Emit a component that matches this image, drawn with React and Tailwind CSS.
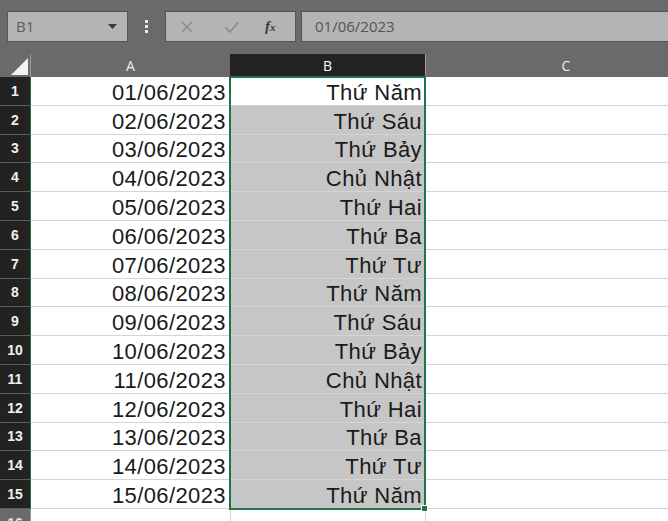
const dates = [
  ['01/06/2023', 'Thứ Năm'],
  ['02/06/2023', 'Thứ Sáu'],
  ['03/06/2023', 'Thứ Bảy'],
  ['04/06/2023', 'Chủ Nhật'],
  ['05/06/2023', 'Thứ Hai'],
  ['06/06/2023', 'Thứ Ba'],
  ['07/06/2023', 'Thứ Tư'],
  ['08/06/2023', 'Thứ Năm'],
  ['09/06/2023', 'Thứ Sáu'],
  ['10/06/2023', 'Thứ Bảy'],
  ['11/06/2023', 'Chủ Nhật'],
  ['12/06/2023', 'Thứ Hai'],
  ['13/06/2023', 'Thứ Ba'],
  ['14/06/2023', 'Thứ Tư'],
  ['15/06/2023', 'Thứ Năm'],
]

function Row({ n, a, b, active }) {
  return (
    <div className="flex h-[28.8px]">
      <div className="w-[30px] shrink-0 bg-[#222222] border-b border-[#5c5c5c] flex items-end justify-center pb-[3px] text-[14px] text-[#f0f0f0] font-semibold">
        {n}
      </div>
      <div className="w-px shrink-0 bg-[#217346]" />
      <div className="w-[199px] shrink-0 bg-white border-b border-[#d4d4d4] flex items-end justify-end pr-[4px] text-[22px] leading-none pb-[1px] tracking-[0.4px] text-[#1a1a1a]">
        {a}
      </div>
      <div className={`w-[195px] shrink-0 border-b border-[#d4d4d4] border-l border-[#d4d4d4] flex items-end justify-end pr-[3px] text-[22px] leading-none pb-[1px] tracking-[0.4px] text-[#1a1a1a] ${active ? 'bg-white' : 'bg-[#c6c6c6]'}`}>
        {b}
      </div>
      <div className="flex-1 bg-white border-b border-l border-[#d4d4d4]" />
    </div>
  )
}

export default function App() {
  return (
    <div className="w-[668px] h-[521px] overflow-hidden relative bg-white font-['Liberation_Sans',Arial,sans-serif]">
      {/* formula bar */}
      <div className="h-[54px] bg-[#6a6a6a] flex items-start pt-[11px] pl-[7px]">
        <div className="w-[121px] h-[31px] bg-[#b4b4b4] border border-[#555] flex items-center justify-between pl-[8px] pr-[10px] text-[15px] text-[#5a5a5a] font-['Open_Sans',sans-serif]">
          <span>B1</span>
          <svg width="9" height="6" viewBox="0 0 9 6"><path d="M0 0h9L4.5 5z" fill="#3a3a3a" /></svg>
        </div>
        <div className="w-[37px] h-[31px] flex flex-col items-center justify-center gap-[2px]">
          <div className="w-[3px] h-[3px] bg-[#e8e8e8]" />
          <div className="w-[3px] h-[3px] bg-[#e8e8e8]" />
          <div className="w-[3px] h-[3px] bg-[#e8e8e8]" />
        </div>
        <div className="w-[131px] h-[31px] bg-[#b4b4b4] border border-[#555] flex items-center pl-[14px]">
          <svg width="14" height="14" viewBox="0 0 14 14"><path d="M2 2l10 10M12 2L2 12" stroke="#8c8c8c" strokeWidth="1.6" /></svg>
          <svg className="ml-[30px]" width="16" height="14" viewBox="0 0 16 14"><path d="M1.5 7.5l4.5 4.5L14.5 2" stroke="#8c8c8c" strokeWidth="1.8" fill="none" /></svg>
          <span className="ml-[25px] text-[15px] italic font-bold text-[#3a3a3a] font-['Liberation_Serif',serif]">f<span className="text-[11px]">x</span></span>
        </div>
        <div className="ml-[5px] flex-1 h-[31px] bg-[#b4b4b4] border-y border-l border-[#555] flex items-center pl-[13px] text-[15px] text-[#555] font-['Open_Sans',sans-serif]">
          01/06/2023
        </div>
      </div>

      {/* column headers */}
      <div className="flex h-[23px] bg-[#6a6a6a] text-[14px] text-[#ececec] font-['Open_Sans',sans-serif]">
        <div className="w-[30px] shrink-0 flex items-end justify-end pr-[2px] pb-[2px]">
          <svg width="17" height="17" viewBox="0 0 17 17"><path d="M17 0V17H0z" fill="#f2f2f2" /></svg>
        </div>
        <div className="w-px shrink-0 bg-[#9a9a9a]" />
        <div className="w-[199px] shrink-0 flex items-center justify-center">A</div>
        <div className="w-[195px] shrink-0 bg-[#232323] flex items-center justify-center text-white">B</div>
        <div className="w-px shrink-0 bg-[#9a9a9a]" />
        <div className="w-[280px] shrink-0 flex items-center justify-center">C</div>
      </div>

      {dates.map(([a, b], i) => (
        <Row key={i} n={i + 1} a={a} b={b} active={i === 0} />
      ))}

      <div className="flex h-[28px]">
        <div className="w-[30px] shrink-0 bg-[#6a6a6a] flex items-start justify-center pt-[4px] text-[14px] text-[#e0e0e0] font-semibold">16</div>
        <div className="w-px shrink-0 bg-[#9a9a9a]" />
        <div className="w-[199px] shrink-0 bg-white" />
        <div className="w-[195px] shrink-0 bg-white border-l border-[#d4d4d4]" />
        <div className="flex-1 bg-white border-l border-[#d4d4d4]" />
      </div>

      {/* selection outline */}
      <div className="absolute left-[229px] top-[76px] w-[197px] h-[434px] border-2 border-[#217346] pointer-events-none" />
      <div className="absolute left-[421px] top-[505px] w-[7px] h-[7px] bg-[#217346] border border-white" />
    </div>
  )
}
